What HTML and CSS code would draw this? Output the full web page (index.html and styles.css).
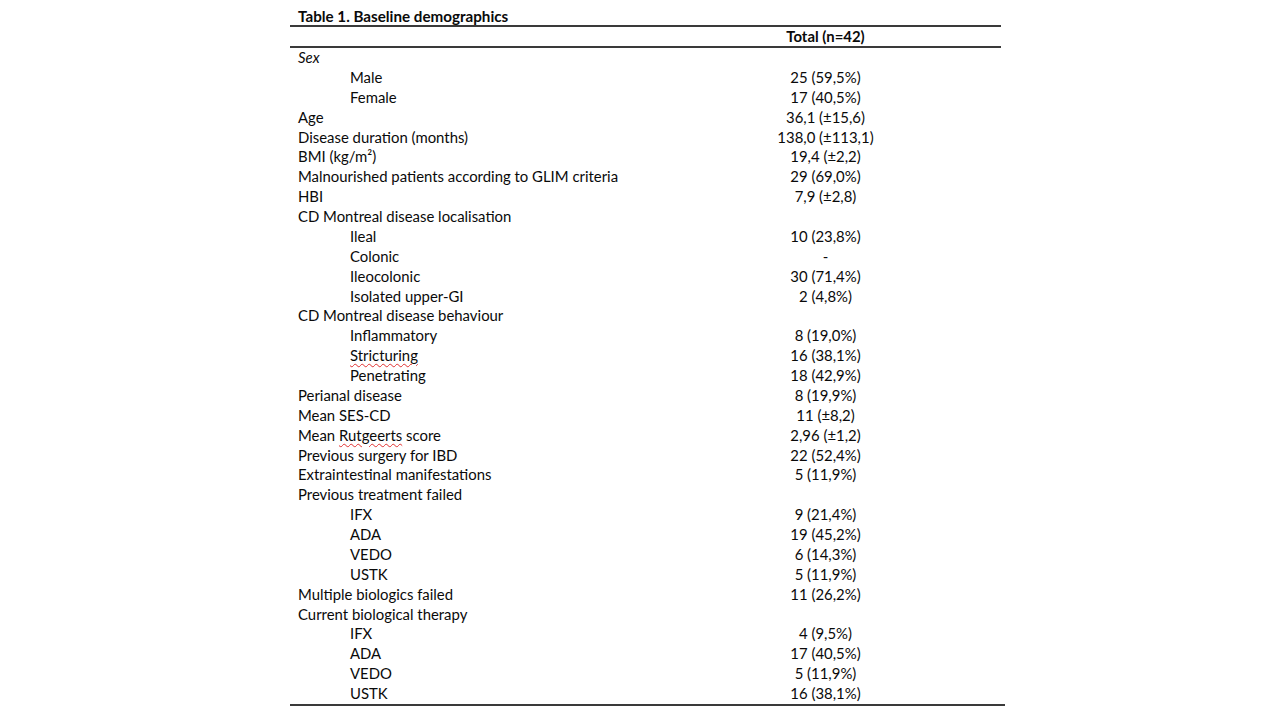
FILE: index.html
```html
<!DOCTYPE html>
<html>
<head>
<meta charset="utf-8">
<link rel="stylesheet" href="styles.css">
</head>
<body>
<div class="page">
  <div class="table">
    <div class="title">Table 1. Baseline demographics</div>
    <div class="head"><span class="lab"></span><span class="val">Total (n=42)</span></div>
    <div class="body">
      <div class="row"><span class="lab it">Sex</span><span class="val"></span></div>
      <div class="row sub"><span class="lab">Male</span><span class="val">25 (59,5%)</span></div>
      <div class="row sub"><span class="lab">Female</span><span class="val">17 (40,5%)</span></div>
      <div class="row"><span class="lab">Age</span><span class="val">36,1 (±15,6)</span></div>
      <div class="row"><span class="lab">Disease duration (months)</span><span class="val">138,0 (±113,1)</span></div>
      <div class="row"><span class="lab">BMI (kg/m²)</span><span class="val">19,4 (±2,2)</span></div>
      <div class="row"><span class="lab">Malnourished patients according to GLIM criteria</span><span class="val">29 (69,0%)</span></div>
      <div class="row"><span class="lab">HBI</span><span class="val">7,9 (±2,8)</span></div>
      <div class="row"><span class="lab">CD Montreal disease localisation</span><span class="val"></span></div>
      <div class="row sub"><span class="lab">Ileal</span><span class="val">10 (23,8%)</span></div>
      <div class="row sub"><span class="lab">Colonic</span><span class="val">-</span></div>
      <div class="row sub"><span class="lab">Ileocolonic</span><span class="val">30 (71,4%)</span></div>
      <div class="row sub"><span class="lab">Isolated upper-GI</span><span class="val">2 (4,8%)</span></div>
      <div class="row"><span class="lab">CD Montreal disease behaviour</span><span class="val"></span></div>
      <div class="row sub"><span class="lab">Inflammatory</span><span class="val">8 (19,0%)</span></div>
      <div class="row sub"><span class="lab"><span class="spell">Stricturing</span></span><span class="val">16 (38,1%)</span></div>
      <div class="row sub"><span class="lab">Penetrating</span><span class="val">18 (42,9%)</span></div>
      <div class="row"><span class="lab">Perianal disease</span><span class="val">8 (19,9%)</span></div>
      <div class="row"><span class="lab">Mean SES-CD</span><span class="val">11 (±8,2)</span></div>
      <div class="row"><span class="lab">Mean <span class="spell">Rutgeerts</span> score</span><span class="val">2,96 (±1,2)</span></div>
      <div class="row"><span class="lab">Previous surgery for IBD</span><span class="val">22 (52,4%)</span></div>
      <div class="row"><span class="lab">Extraintestinal manifestations</span><span class="val">5 (11,9%)</span></div>
      <div class="row"><span class="lab">Previous treatment failed</span><span class="val"></span></div>
      <div class="row sub"><span class="lab">IFX</span><span class="val">9 (21,4%)</span></div>
      <div class="row sub"><span class="lab">ADA</span><span class="val">19 (45,2%)</span></div>
      <div class="row sub"><span class="lab">VEDO</span><span class="val">6 (14,3%)</span></div>
      <div class="row sub"><span class="lab">USTK</span><span class="val">5 (11,9%)</span></div>
      <div class="row"><span class="lab">Multiple biologics failed</span><span class="val">11 (26,2%)</span></div>
      <div class="row"><span class="lab">Current biological therapy</span><span class="val"></span></div>
      <div class="row sub"><span class="lab">IFX</span><span class="val">4 (9,5%)</span></div>
      <div class="row sub"><span class="lab">ADA</span><span class="val">17 (40,5%)</span></div>
      <div class="row sub"><span class="lab">VEDO</span><span class="val">5 (11,9%)</span></div>
      <div class="row sub"><span class="lab">USTK</span><span class="val">16 (38,1%)</span></div>
    </div>
    <div class="bottom"></div>
  </div>
</div>
</body>
</html>
```
FILE: styles.css
```css
html, body {
  margin: 0;
  padding: 0;
  background: #ffffff;
}
body {
  font-family: "Lato", "Liberation Sans", sans-serif;
  font-size: 14.9px;
  color: #0a0a0a;
}
.page {
  width: 1280px;
  height: 720px;
  padding-left: 290px;
  padding-top: 7px;
  box-sizing: border-box;
}
.table {
  width: 711px;
}
.title {
  font-weight: 700;
  font-size: 15.2px;
  padding-left: 8px;
  line-height: 18px;
  border-bottom: 2px solid #3a3a3a;
}
.head {
  display: grid;
  grid-template-columns: 360px 351px;
  line-height: 19px;
  font-weight: 700;
  border-bottom: 2px solid #3a3a3a;
}
.row {
  display: grid;
  grid-template-columns: 360px 351px;
  line-height: 19.875px;
}
.lab {
  padding-left: 8px;
  white-space: nowrap;
}
.sub .lab {
  padding-left: 60px;
}
.val {
  text-align: center;
}
.it {
  font-style: italic;
}
.spell {
  text-decoration: underline wavy #e03030;
  text-decoration-thickness: 1px;
  text-underline-offset: 2px;
}
.bottom {
  width: 715px;
  height: 0;
  border-top: 2px solid #3a3a3a;
}
```
